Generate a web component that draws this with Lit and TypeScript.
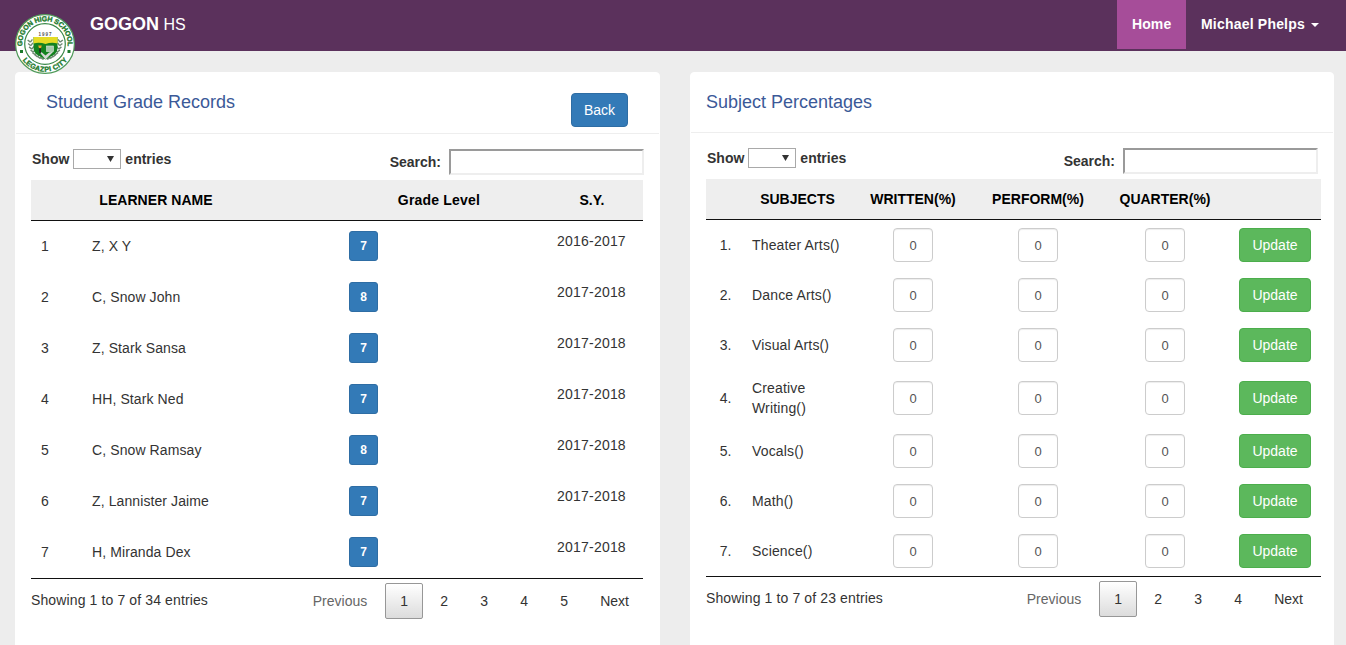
import { LitElement, html, css, svg } from "lit";
import { customElement, property } from "lit/decorators.js";

const shared = css`
  :host { display: block; box-sizing: border-box; }
  *, *::before, *::after { box-sizing: border-box; }
  button { font-family: inherit; margin: 0; cursor: pointer; }
  .btn {
    display: inline-block; padding: 6px 12px; font-size: 14px; line-height: 20px;
    border: 1px solid; border-radius: 4px; color: #fff; white-space: nowrap;
  }
  .primary { background: #337ab7; border-color: #2e6da4; }
  .success { background: #5cb85c; border-color: #4cae4c; }
`;

@customElement("school-seal")
class SchoolSeal extends LitElement {
  static styles = css`
    :host { display: block; width: 60px; height: 60px; }
    svg { display: block; }
    .ring { font: bold 7px "Liberation Sans", Arial, sans-serif; fill: #1c7a2c; stroke: #1c7a2c; stroke-width: 0.35; }
    .year { font: bold 4.5px "Liberation Sans", Arial, sans-serif; fill: #555; }
  `;
  render() {
    const leaves = [0, 1, 2, 3, 4, 5, 6, 7];
    const branch = leaves.map((i) => {
      const a = Math.PI * (0.98 - i * 0.062);
      const x = 30 + Math.cos(a) * 14.6;
      const y = 27 + Math.sin(a) * 18.5;
      return svg`<path d="M${x} ${y}l-2.800 -2.200M${x} ${y}l2 -2.800" stroke="#6d8a72" stroke-width="1.400"/>`;
    });
    return html`
      <svg width="60" height="60" viewBox="0 0 60 60">
        <defs>
          <path id="top" d="M9 38.500A22.700 22.700 0 1 1 51 38.500" />
          <path id="bottom" d="M4.800 41.200A27.600 27.600 0 0 0 55.200 41.200" />
        </defs>
        <circle cx="30" cy="30" r="29.400" fill="#fff" stroke="#4f9a59" stroke-width="1.200" />
        <circle cx="30" cy="30" r="20.300" fill="#fff" stroke="#398847" stroke-width="1.200" />
        <text class="ring"><textPath href="#top" startOffset="50%" text-anchor="middle" textLength="76">GOGON HIGH SCHOOL</textPath></text>
        <text class="ring"><textPath href="#bottom" startOffset="50%" text-anchor="middle" textLength="52">LEGAZPI CITY</textPath></text>
        <rect x="5" y="36" width="3" height="3" fill="#1c7a2c" />
        <rect x="52.500" y="36" width="3" height="3" fill="#1c7a2c" />
        <g fill="none">${branch}</g>
        <g fill="none" transform="translate(60.500 0) scale(-1 1)">${branch}</g>
        <text class="year" x="23.500" y="22" textLength="13">1997</text>
        <path d="M18.500 23h24v10.500q0 5-4 7.500l-8 4.500-8-4.500q-4-2.500-4-7.500z" fill="#13831f" />
        <path d="M18.500 23h24v6.500q-6-1.500-12 .5-6-2-12-.5z" fill="#e4dc25" />
        <path d="M24 37.500l6.500 8 8-8-4.500 1-3.500 3-3.500-3z" fill="#d5d9d5" />
        <rect x="31.500" y="32" width="7" height="5.500" fill="#a9c9ac" stroke="#dce9dd" stroke-width=".6" />
        <path d="M23.200 31.500h3.600l-.8 2.800h-2z" fill="#f1a52b" />
        <path d="M24.200 34.300h1.700v5h-1.700z" fill="#222" />
      </svg>`;
  }
}

@customElement("list-controls")
class ListControls extends LitElement {
  static styles = [shared, css`
    .row { display: flex; justify-content: space-between; height: 31px; font-weight: bold; color: #333; }
    .label { display: flex; align-items: center; height: 20px; }
    .length { padding-left: 1px; }
    .select {
      display: flex; align-items: center; justify-content: flex-end; width: 48px; height: 20px;
      margin: 0 4px; padding-right: 6px; border: 1px solid #a9a9a9; background: #fff;
    }
    .search { height: 26px; }
    .input {
      width: 195px; height: 26px; margin-left: 8px; padding: 1px; background: #fff;
      border: 2px solid; border-color: #9a9a9a #eee #eee #9a9a9a; border-radius: 0; outline: 0;
    }
  `];
  render() {
    return html`<div class="row">
      <div class="label length">Show
        <span class="select"><svg width="7" height="6" viewBox="0 0 7 6"><path d="M0 0h7L3.500 6z" fill="#333" /></svg></span>
        entries</div>
      <label class="label search">Search:<input class="input" aria-label="Search" /></label>
    </div>`;
  }
}

@customElement("list-footer")
class ListFooter extends LitElement {
  @property({ type: Number }) total = 0;
  @property({ type: Number }) pages = 1;
  static styles = [shared, css`
    .row { display: flex; justify-content: space-between; color: #333; }
    .info { padding-top: 11px; line-height: 20px; letter-spacing: 0.12px; }
    .pager { display: flex; gap: 2px; padding-top: 4px; }
    .page {
      height: 36px; min-width: 38px; padding: 7px 14px; border: 1px solid transparent;
      border-radius: 2px; text-align: center; line-height: 20px; color: #333;
    }
    .disabled { color: #666; }
    .current { border-color: #979797; background: linear-gradient(#fff, #dcdcdc); margin-left: 1px; }
  `];
  render() {
    const nums = Array.from({ length: this.pages }, (_, i) => i + 1);
    return html`<div class="row">
      <div class="info">Showing 1 to 7 of ${this.total} entries</div>
      <div class="pager">
        <span class="page disabled">Previous</span>
        ${nums.map((n) => html`<span class="page ${n === 1 ? "current" : ""}">${n}</span>`)}
        <span class="page">Next</span>
      </div>
    </div>`;
  }
}

const tableStyles = css`
  .head, .line { display: grid; }
  .head {
    height: 41px; background: #eee; border-bottom: 1px solid #111; color: #000; font-weight: bold;
    line-height: 40px; text-align: center; white-space: nowrap;
  }
  .body { border-bottom: 1px solid #111; }
`;

@customElement("grade-table")
class GradeTable extends LitElement {
  static styles = [shared, tableStyles, css`
    .head, .line { grid-template-columns: 51px 148px 109px 200px 104px; }
    .head { letter-spacing: 0.05px; }
    .school-year { padding-left: 2px; }
    .level { letter-spacing: 0.2px; }
    .line { height: 51px; line-height: 20px; padding-top: 10px; }
    .num, .name { padding: 5px 0 0 10px; white-space: nowrap; }
    .name { letter-spacing: 0.1px; }
    .grade { grid-column: 4; padding-left: 10px; }
    .small { width: 29px; height: 30px; padding: 4px 0; border-radius: 3px; font-size: 12px; line-height: 20px; font-weight: bold; }
    .year { text-align: center; letter-spacing: 0.2px; padding-left: 1px; }
  `];
  render() {
    const rows: [string, number, string][] = [
      ["Z, X Y", 7, "2016-2017"],
      ["C, Snow John", 8, "2017-2018"],
      ["Z, Stark Sansa", 7, "2017-2018"],
      ["HH, Stark Ned", 7, "2017-2018"],
      ["C, Snow Ramsay", 8, "2017-2018"],
      ["Z, Lannister Jaime", 7, "2017-2018"],
      ["H, Miranda Dex", 7, "2017-2018"],
    ];
    return html`
      <div class="head"><span></span><span>LEARNER NAME</span><span></span><span class="level">Grade Level</span><span class="school-year">S.Y.</span></div>
      <div class="body">${rows.map(([name, grade, year], i) => html`
        <div class="line">
          <span class="num">${i + 1}</span><span class="name">${name}</span>
          <span class="grade"><button class="btn primary small">${grade}</button></span>
          <span class="year">${year}</span>
        </div>`)}</div>`;
  }
}

@customElement("subject-table")
class SubjectTable extends LitElement {
  static styles = [shared, tableStyles, css`
    .head, .line { grid-template-columns: 36px 109px 124px 126px 128px 92px; }
    .subject { padding-left: 2px; }
    .line { align-items: center; min-height: 50px; padding: 8px 0; line-height: 20px; }
    .num { text-align: center; padding-left: 3px; }
    .name { padding-left: 10px; letter-spacing: 0.15px; }
    .cell { display: flex; justify-content: center; }
    .box {
      width: 40px; height: 34px; padding: 6px 0; border: 1px solid #ccc; border-radius: 4px;
      text-align: center; color: #555; background: #fff; outline: 0;
      font: 13px/20px "Liberation Sans", Arial, sans-serif; box-shadow: inset 0 1px 1px rgba(0, 0, 0, 0.075);
    }
    .tall { height: 56px; }
  `];
  render() {
    const names = ["Theater Arts()", "Dance Arts()", "Visual Arts()", "Creative Writing()", "Vocals()", "Math()", "Science()"];
    const box = html`<span class="cell"><input class="box" value="0" /></span>`;
    return html`
      <div class="head"><span></span><span class="subject">SUBJECTS</span><span>WRITTEN(%)</span><span>PERFORM(%)</span><span>QUARTER(%)</span><span></span></div>
      <div class="body">${names.map((name, i) => html`
        <div class="line ${name.length > 15 ? "tall" : ""}">
          <span class="num">${i + 1}.</span><span class="name">${name}</span>
          ${box}${box}${box}
          <span class="cell"><button class="btn success">Update</button></span>
        </div>`)}</div>`;
  }
}

@customElement("app-root")
class AppRoot extends LitElement {
  static styles = [shared, css`
    :host {
      height: 645px; overflow: hidden; background: #ededed; color: #333;
      font: 14px/20px "Liberation Sans", Arial, sans-serif;
    }
    .nav { display: flex; align-items: flex-start; height: 51px; padding-left: 15px; background: #5b315c; color: #fff; }
    .seal { position: relative; top: 14px; z-index: 1; }
    .brand { flex: 1; padding: 13px 0 0 15px; font-size: 16px; line-height: 22px; }
    .strong { font-size: 18px; }
    .link { height: 49px; padding: 14px 15px; font-weight: bold; line-height: 20px; letter-spacing: 0.1px; }
    .active { background: #a64d99; width: 69px; }
    .user { display: flex; align-items: flex-start; width: 160px; letter-spacing: 0.2px; }
    .caret { margin: 9px 0 0 6px; border: 4px solid transparent; border-top-color: #fff; border-bottom: 0; }
    .main { display: grid; grid-template-columns: 645px 644px; gap: 30px; padding: 21px 0 0 15px; }
    .panel { height: 600px; background: #fff; border: 1px solid #fff; border-radius: 4px; }
    .title {
      display: flex; justify-content: space-between; height: 60px; padding: 18px 15px 0; border-bottom: 1px solid #eee;
      font-size: 18px; line-height: 22px; color: #3b5998;
    }
    .grades { height: 61px; padding: 18px 31px 0 30px; }
    .back { height: 34px; margin-top: 2px; }
    .content { padding: 15px 16px 0 15px; }
    .right { padding-right: 12px; }
    .controls { margin-right: 3px; }
    .wide { margin-right: -1px; }
    .inset { margin-right: 3px; }
  `];
  render() {
    return html`
      <nav class="nav">
        <school-seal class="seal"></school-seal>
        <div class="brand"><b class="strong">GOGON</b> HS</div>
        <div class="link active">Home</div>
        <div class="link user">Michael Phelps<span class="caret"></span></div>
      </nav>
      <main class="main">
        <section class="panel">
          <div class="title grades"><span>Student Grade Records</span><button class="btn primary back">Back</button></div>
          <div class="content">
            <list-controls class="wide"></list-controls>
            <grade-table></grade-table>
            <list-footer class="wide" total="34" pages="5"></list-footer>
          </div>
        </section>
        <section class="panel">
          <div class="title"><span>Subject Percentages</span></div>
          <div class="content right">
            <list-controls class="controls"></list-controls>
            <subject-table></subject-table>
            <list-footer class="inset" total="23" pages="4"></list-footer>
          </div>
        </section>
      </main>`;
  }
}
